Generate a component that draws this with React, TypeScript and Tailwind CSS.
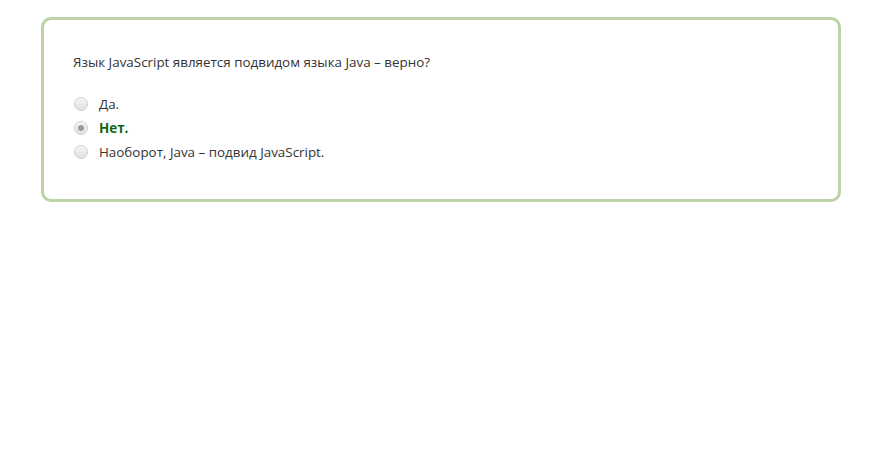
export default function App() {
  const options = [
    { label: "Да.", checked: false },
    { label: "Нет.", checked: true },
    { label: "Наоборот, Java – подвид JavaScript.", checked: false },
  ];

  return (
    <div className="min-h-[460px] bg-white pt-[17px] pl-[41px]" style={{ fontFamily: '"Open Sans", "Noto Sans", sans-serif' }}>
      <div className="w-[800px] h-[185px] rounded-[10px] border-[3px] border-[#bcd4a5] px-[29px] pt-[30px]">
        <p className="text-[13.4px] leading-[24px] text-[#333]">
          Язык JavaScript является подвидом языка Java – верно?
        </p>
        <ul className="mt-[18px]">
          {options.map((o, i) => (
            <li key={i} className="flex items-center h-6 text-[13.4px]">
              <span className="w-[14px] h-[14px] rounded-full border border-[#cfcfcf] bg-gradient-to-b from-[#f4f4f4] to-[#e2e2e2] flex items-center justify-center mr-[11px] ml-[1px]">
                {o.checked && <span className="w-[6px] h-[6px] rounded-full bg-[#9a9a9a]" />}
              </span>
              <span className={o.checked ? "font-bold text-[#11660f]" : "text-[#333]"}>{o.label}</span>
            </li>
          ))}
        </ul>
      </div>
    </div>
  );
}
